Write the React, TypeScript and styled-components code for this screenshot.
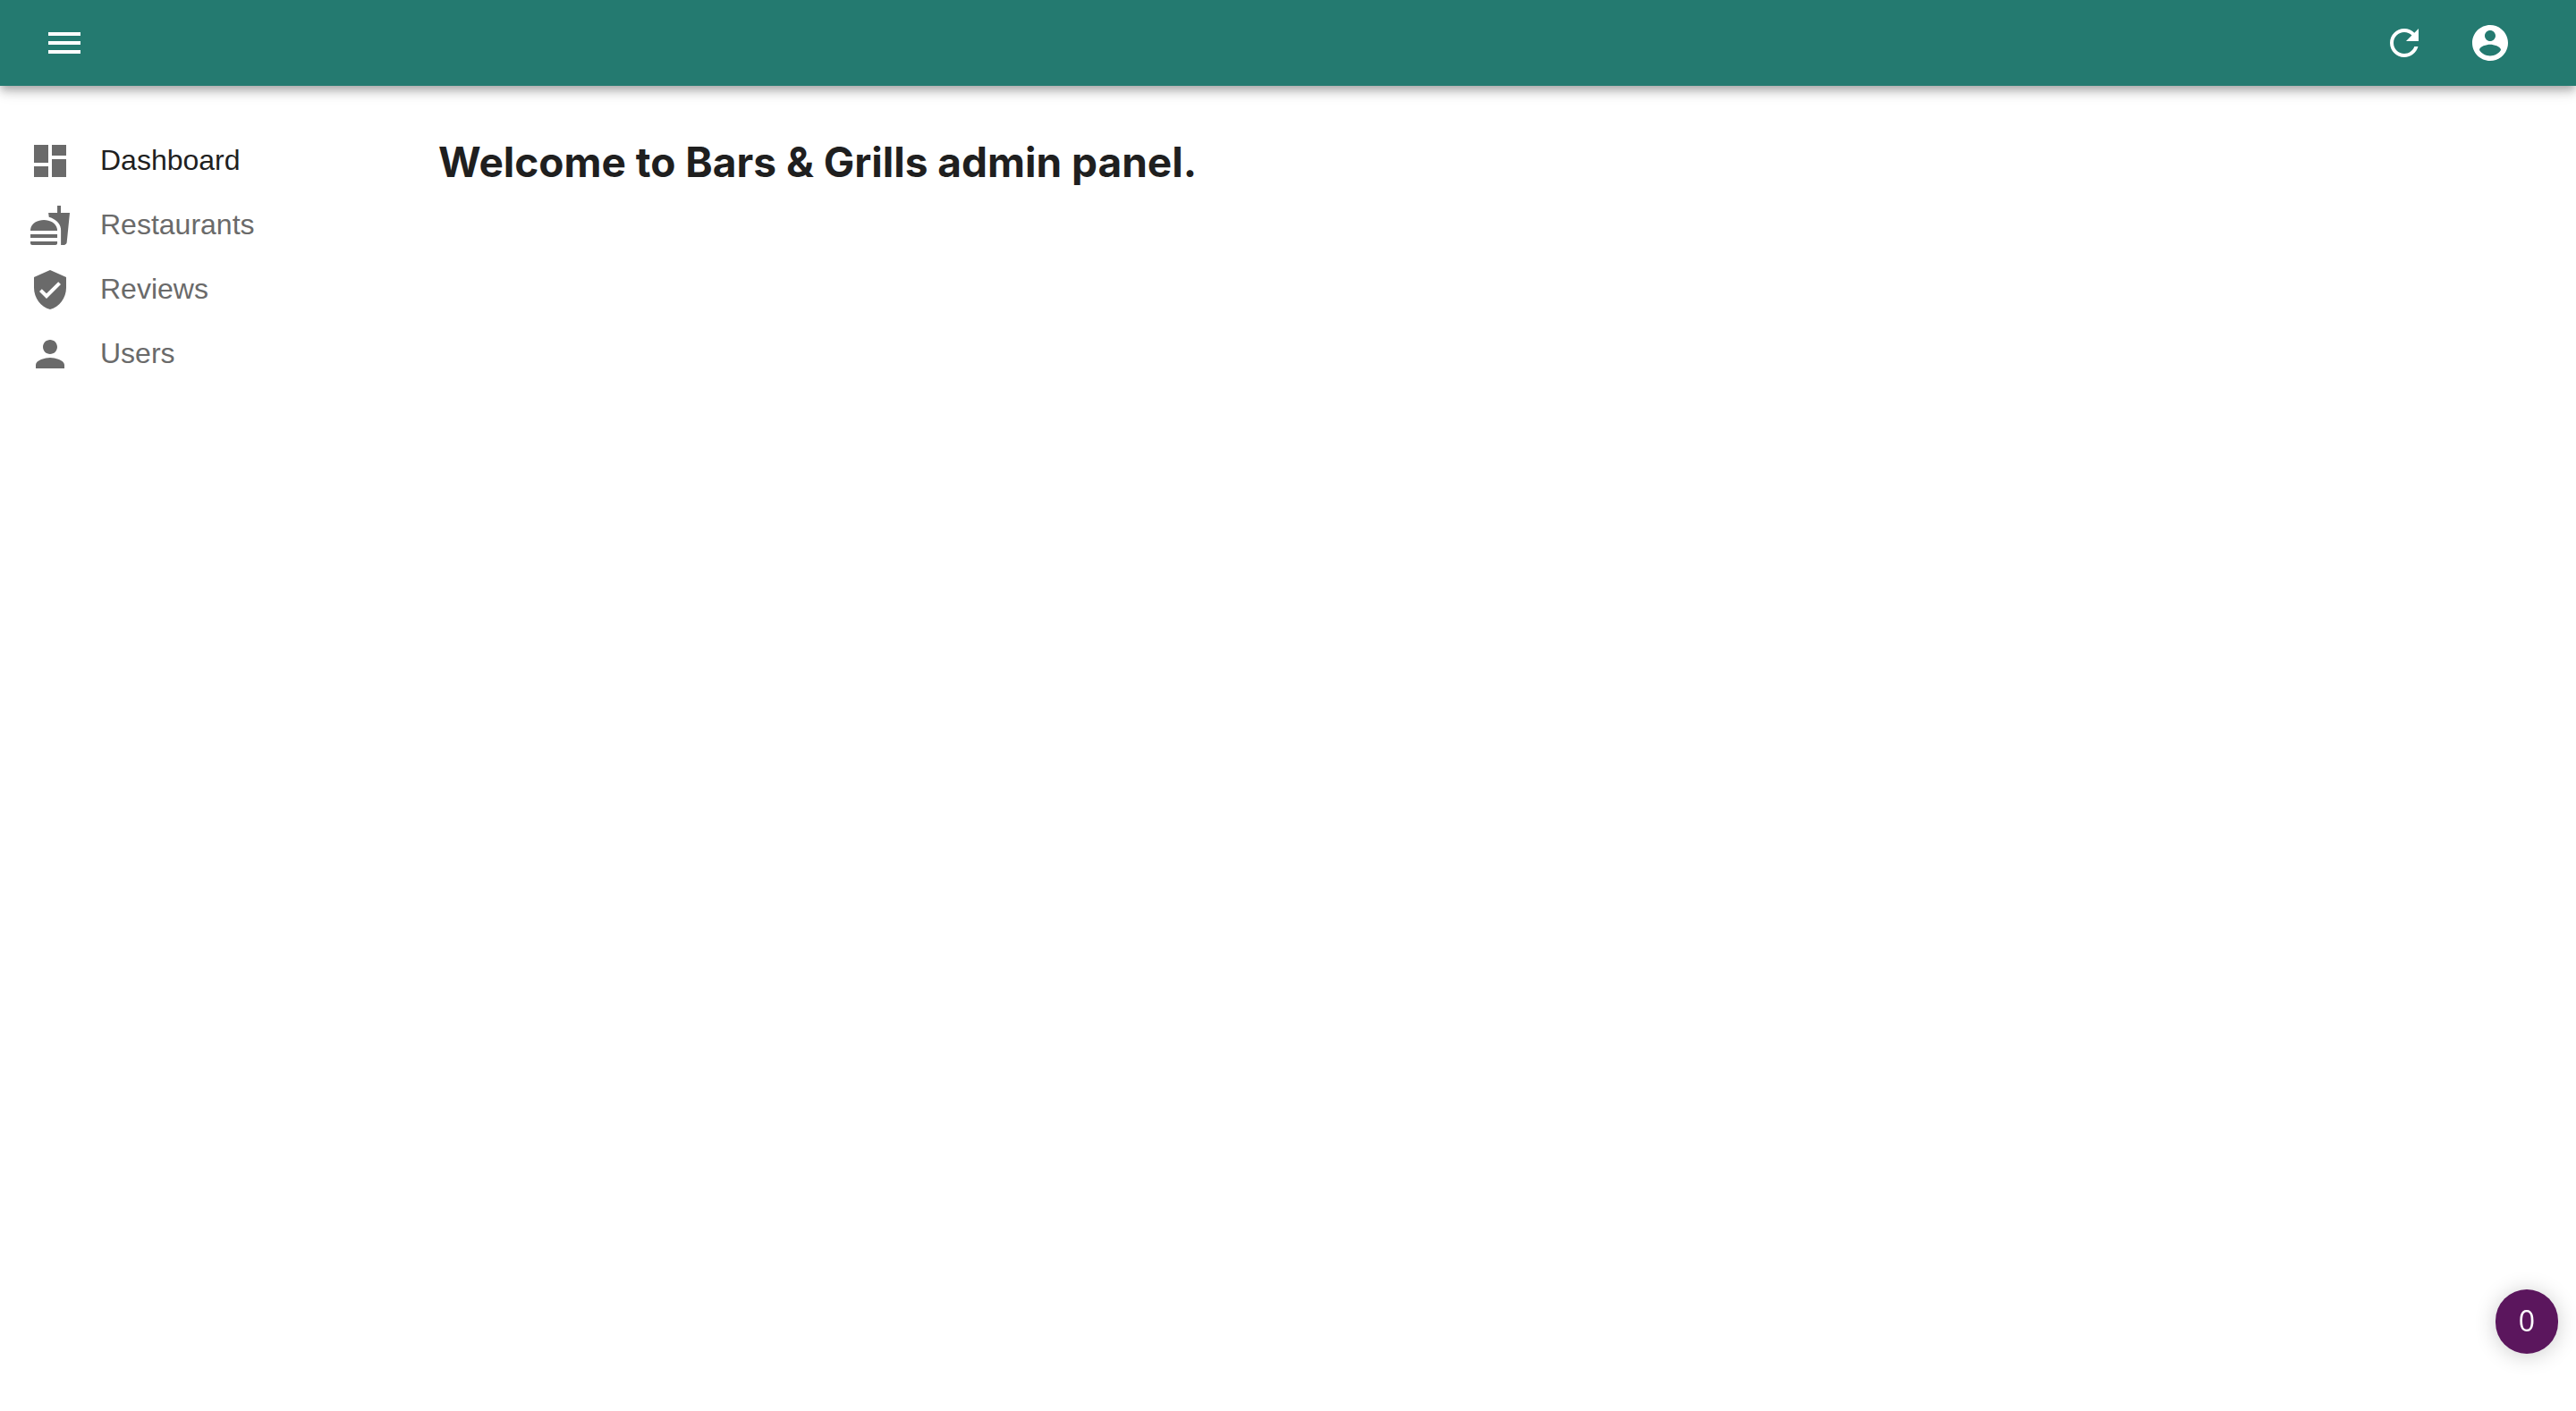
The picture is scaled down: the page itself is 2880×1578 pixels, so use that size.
import React, { useState } from "react";
import styled, { createGlobalStyle } from "styled-components";

const GlobalStyle = createGlobalStyle`
  *, *::before, *::after {
    box-sizing: border-box;
  }
  body {
    margin: 0;
    background: #ffffff;
    color: #1f1f1f;
    font-family: "Liberation Sans", Helvetica, Arial, sans-serif;
  }
`;

const Page = styled.div`
  display: flex;
  flex-direction: column;
  min-height: 100vh;
`;

const AppBar = styled.header`
  display: flex;
  align-items: center;
  justify-content: space-between;
  height: 96px;
  padding: 0 48px 0 24px;
  background: #247a70;
  color: #ffffff;
  box-shadow:
    0 4px 8px -2px rgba(0, 0, 0, 0.2),
    0 8px 10px 0 rgba(0, 0, 0, 0.14),
    0 2px 20px 0 rgba(0, 0, 0, 0.12);
`;

const Actions = styled.div`
  display: flex;
`;

const IconButton = styled.button`
  display: flex;
  padding: 24px;
  border: 0;
  border-radius: 50%;
  background: transparent;
  color: inherit;
  cursor: pointer;
`;

const Icon = styled.svg`
  flex: none;
  width: 48px;
  height: 48px;
  fill: currentColor;
`;

const Body = styled.div`
  display: flex;
  flex: 1;
`;

const Sidebar = styled.nav`
  flex: none;
  width: 480px;
  padding-top: 48px;
`;

const NavList = styled.ul`
  margin: 0;
  padding: 0;
  list-style: none;
`;

const NavLink = styled.a<{ $active: boolean }>`
  display: flex;
  align-items: center;
  gap: 32px;
  height: 72px;
  padding: 0 32px;
  color: ${({ $active }) => ($active ? "#1f1f1f" : "#6a6a6a")};
  font-size: 32px;
  line-height: 48px;
  text-decoration: none;

  ${Icon} {
    color: #6a6a6a;
  }
`;

const NavLabel = styled.span`
  padding-bottom: 2px;
`;

const Main = styled.main`
  flex: 1;
  padding: 56px 48px 48px 10px;
`;

const Title = styled.h1`
  margin: 0;
  font-family: Inter, "Open Sans", sans-serif;
  font-size: 46px;
  font-weight: 700;
  line-height: 58px;
`;

const CountButton = styled.button`
  position: fixed;
  right: 20px;
  bottom: 64px;
  display: flex;
  align-items: center;
  justify-content: center;
  width: 70px;
  height: 72px;
  padding: 0 0 2px;
  border: 0;
  border-radius: 36px;
  background: #5b165d;
  color: #ffffff;
  font-family: "Open Sans", "Noto Sans", sans-serif;
  font-size: 32px;
  line-height: 48px;
  box-shadow: 0 2px 24px rgba(0, 0, 0, 0.2);
  cursor: pointer;
`;

const icons = {
  menu: "M3 18h18v-2H3v2zm0-5h18v-2H3v2zm0-7v2h18V6H3z",
  refresh:
    "M17.65 6.35C16.2 4.9 14.21 4 12 4c-4.42 0-7.99 3.58-7.99 8s3.57 8 7.99 8c3.73 0 6.84-2.55 7.73-6h-2.08c-.82 2.33-3.04 4-5.65 4-3.31 0-6-2.69-6-6s2.69-6 6-6c1.66 0 3.14.69 4.22 1.78L13 11h7V4l-2.35 2.35z",
  account:
    "M12 2C6.48 2 2 6.48 2 12s4.48 10 10 10 10-4.48 10-10S17.52 2 12 2zm0 3c1.66 0 3 1.34 3 3s-1.34 3-3 3-3-1.34-3-3 1.34-3 3-3zm0 14.2c-2.5 0-4.71-1.28-6-3.22.03-1.99 4-3.08 6-3.08 1.99 0 5.97 1.09 6 3.08-1.29 1.94-3.5 3.22-6 3.22z",
  dashboard: "M3 13h8V3H3v10zm0 8h8v-6H3v6zm10 0h8V11h-8v10zm0-18v6h8V3h-8z",
  fastfood:
    "M18.06 22.99h1.66c.84 0 1.53-.64 1.63-1.46L23 5.05h-5V1h-1.97v4.05h-4.97l.3 2.34c1.71.47 3.31 1.32 4.27 2.26 1.44 1.42 2.43 2.89 2.43 5.29v8.05zM1 21.99V21h15.03v.99c0 .55-.45 1-1.01 1H2.01c-.56 0-1.01-.45-1.01-1zm15.03-7c0-8-15.03-8-15.03 0h15.03zM1.02 17h15v2h-15z",
  verified:
    "M12 1L3 5v6c0 5.55 3.84 10.74 9 12 5.16-1.26 9-6.45 9-12V5l-9-4zm-2 16l-4-4 1.41-1.41L10 14.17l6.59-6.59L18 9l-8 8z",
  person:
    "M12 12c2.21 0 4-1.79 4-4s-1.79-4-4-4-4 1.79-4 4 1.79 4 4 4zm0 2c-2.67 0-8 1.34-8 4v2h16v-2c0-2.66-5.33-4-8-4z",
};

type IconName = keyof typeof icons;

function Glyph({ name }: { name: IconName }) {
  return (
    <Icon viewBox="0 0 24 24" aria-hidden="true">
      <path d={icons[name]} />
    </Icon>
  );
}

const items: { id: string; label: string; icon: IconName }[] = [
  { id: "dashboard", label: "Dashboard", icon: "dashboard" },
  { id: "restaurants", label: "Restaurants", icon: "fastfood" },
  { id: "reviews", label: "Reviews", icon: "verified" },
  { id: "users", label: "Users", icon: "person" },
];

export default function App() {
  const [active, setActive] = useState("dashboard");

  return (
    <>
      <GlobalStyle />
      <Page>
        <AppBar>
          <IconButton type="button" aria-label="Toggle menu">
            <Glyph name="menu" />
          </IconButton>
          <Actions>
            <IconButton type="button" aria-label="Refresh">
              <Glyph name="refresh" />
            </IconButton>
            <IconButton type="button" aria-label="Profile">
              <Glyph name="account" />
            </IconButton>
          </Actions>
        </AppBar>
        <Body>
          <Sidebar aria-label="Main">
            <NavList>
              {items.map((item) => (
                <li key={item.id}>
                  <NavLink
                    href={`#/${item.id}`}
                    $active={item.id === active}
                    aria-current={item.id === active ? "page" : undefined}
                    onClick={() => setActive(item.id)}
                  >
                    <Glyph name={item.icon} />
                    <NavLabel>{item.label}</NavLabel>
                  </NavLink>
                </li>
              ))}
            </NavList>
          </Sidebar>
          <Main>
            <Title>Welcome to Bars &amp; Grills admin panel.</Title>
          </Main>
        </Body>
        <CountButton type="button">0</CountButton>
      </Page>
    </>
  );
}
